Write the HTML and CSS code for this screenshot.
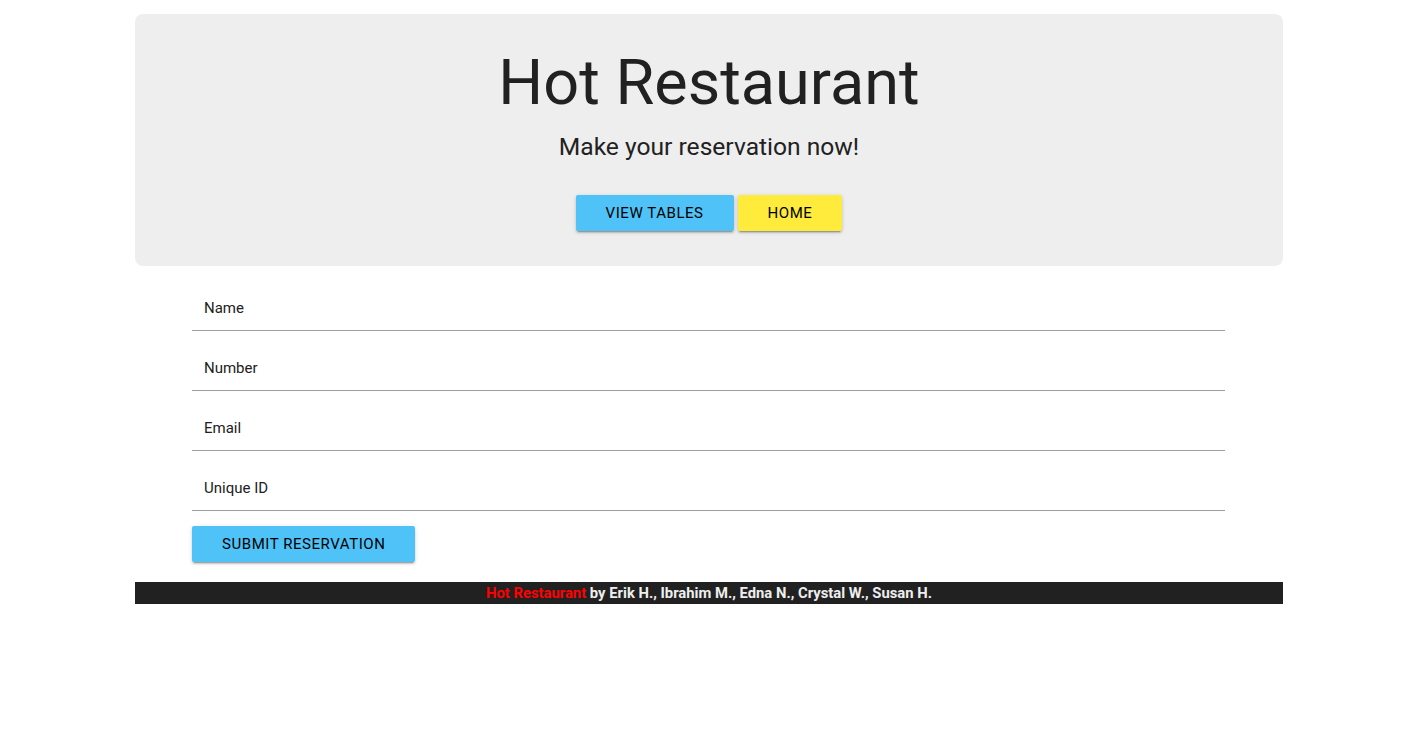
FILE: index.html
```html
<!DOCTYPE html>
<html>
<head>
<meta charset="utf-8">
<title>Hot Restaurant</title>
<link rel="stylesheet" href="styles.css">
</head>
<body>
<div class="container">
  <header class="jumbotron">
    <h1 class="title">Hot Restaurant</h1>
    <p class="subtitle">Make your reservation now!</p>
    <div class="actions">
      <a class="btn btn-blue" href="#">View Tables</a>
      <a class="btn btn-yellow" href="#">Home</a>
    </div>
  </header>
  <form class="form">
    <div class="field"><input type="text" placeholder="Name"></div>
    <div class="field"><input type="text" placeholder="Number"></div>
    <div class="field"><input type="text" placeholder="Email"></div>
    <div class="field"><input type="text" placeholder="Unique ID"></div>
    <button type="button" class="btn btn-blue btn-submit">Submit Reservation</button>
  </form>
  <footer class="footer">
    <span class="brand">Hot Restaurant</span> by Erik H., Ibrahim M., Edna N., Crystal W., Susan H.
  </footer>
</div>
</body>
</html>
```
FILE: styles.css
```css
* { box-sizing: border-box; }
body {
  margin: 0;
  font-family: Roboto, "Liberation Sans", sans-serif;
  color: #212121;
  background: #fff;
}
.container {
  width: 1148px;
  margin: 0 0 0 135px;
  padding-top: 14px;
}
.jumbotron {
  background: #eeeeee;
  border-radius: 8px;
  height: 252px;
  padding-top: 34px;
  text-align: center;
}
.title {
  margin: 0;
  font-size: 63px;
  font-weight: 400;
  line-height: 70px;
}
.subtitle {
  margin: 14px 0 0;
  font-size: 24.6px;
  line-height: 30px;
}
.actions {
  margin-top: 33px;
  display: flex;
  justify-content: center;
  gap: 4px;
}
.btn {
  display: inline-block;
  height: 36px;
  line-height: 36px;
  padding: 0 30px;
  font-family: Roboto, "Liberation Sans", sans-serif;
  font-size: 15px;
  letter-spacing: 0.55px;
  text-transform: uppercase;
  text-decoration: none;
  color: #000;
  border: none;
  border-radius: 2px;
  box-shadow: 0 2px 2px 0 rgba(0,0,0,0.14), 0 1px 5px 0 rgba(0,0,0,0.12), 0 3px 1px -2px rgba(0,0,0,0.2);
}
.btn-blue { background: #4fc3f7; }
.btn-yellow { background: #ffeb3b; }
.form {
  margin: 0 58px 0 57px;
  padding-top: 5px;
  display: flex;
  flex-direction: column;
  align-items: flex-start;
}
.field {
  width: 100%;
  height: 60px;
  border-bottom: 1px solid #9e9e9e;
}
.field input {
  width: 100%;
  height: 59px;
  border: none;
  outline: none;
  background: transparent;
  padding: 14px 12px 0;
  font-family: Roboto, "Liberation Sans", sans-serif;
  font-size: 15px;
  color: #212121;
}
.field input::placeholder { color: #212121; opacity: 1; }
.btn-submit {
  margin-top: 15px;
  cursor: pointer;
}
.footer {
  margin-top: 20px;
  height: 22px;
  line-height: 22px;
  background: #212121;
  color: #eeeeee;
  text-align: center;
  font-size: 14.8px;
  font-weight: 700;
}
.brand { color: #ff0000; }
```
